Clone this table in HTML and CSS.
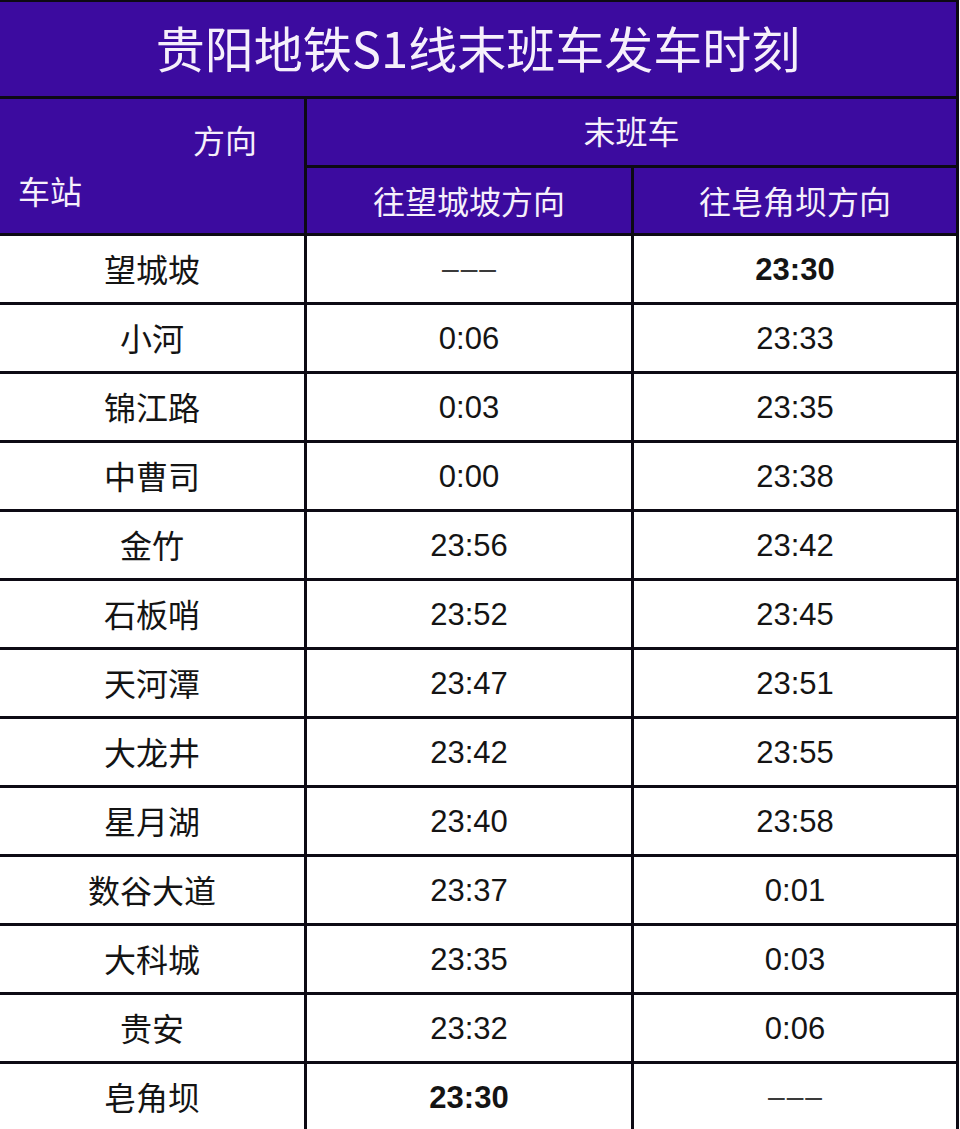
FILE: index.html
```html
<!DOCTYPE html>
<html lang="zh-CN">
<head>
<meta charset="utf-8">
<title>贵阳地铁S1线末班车发车时刻</title>
<link rel="stylesheet" href="styles.css">
</head>
<body>
<div class="sheet">
  <div class="title">贵阳地铁S1线末班车发车时刻</div>
  <div class="corner">
    <span class="dir">方向</span>
    <span class="stn">车站</span>
  </div>
  <div class="hd span2">末班车</div>
  <div class="hd">往望城坡方向</div>
  <div class="hd">往皂角坝方向</div>

  <div class="name">望城坡</div><div class="time dash">–––</div><div class="time bold">23:30</div>
  <div class="name">小河</div><div class="time">0:06</div><div class="time">23:33</div>
  <div class="name">锦江路</div><div class="time">0:03</div><div class="time">23:35</div>
  <div class="name">中曹司</div><div class="time">0:00</div><div class="time">23:38</div>
  <div class="name">金竹</div><div class="time">23:56</div><div class="time">23:42</div>
  <div class="name">石板哨</div><div class="time">23:52</div><div class="time">23:45</div>
  <div class="name">天河潭</div><div class="time">23:47</div><div class="time">23:51</div>
  <div class="name">大龙井</div><div class="time">23:42</div><div class="time">23:55</div>
  <div class="name">星月湖</div><div class="time">23:40</div><div class="time">23:58</div>
  <div class="name">数谷大道</div><div class="time">23:37</div><div class="time">0:01</div>
  <div class="name">大科城</div><div class="time">23:35</div><div class="time">0:03</div>
  <div class="name">贵安</div><div class="time">23:32</div><div class="time">0:06</div>
  <div class="name">皂角坝</div><div class="time bold">23:30</div><div class="time dash">–––</div>
</div>
</body>
</html>
```

FILE: styles.css
```css
html, body {
  margin: 0;
  padding: 0;
  background: #ffffff;
}
body {
  width: 960px;
  height: 1129px;
  overflow: hidden;
  font-family: "Noto Sans CJK SC", "Noto Sans", sans-serif;
}
.sheet {
  width: 956px;
  background: #0d0a14;
  padding: 2px 3px 0 0;
  display: grid;
  grid-template-columns: 304px 324px 322px;
  grid-template-rows: 94px 66px 65px;
  grid-auto-rows: 66px;
  gap: 3px;
}
.title {
  grid-column: 1 / 4;
  background: #3c0b9f;
  color: #f6f0fb;
  font-size: 49px;
  line-height: 1;
  display: flex;
  align-items: center;
  justify-content: center;
  padding-bottom: 5px;
  box-sizing: border-box;
}
.corner {
  grid-row: 2 / 4;
  background: #3c0b9f;
  color: #f6f0fb;
  font-size: 32px;
  line-height: 1;
  display: flex;
  flex-direction: column;
  padding: 24px 0 0 0;
}
.corner .dir {
  align-self: flex-end;
  margin-right: 47px;
}
.corner .stn {
  margin-top: 19px;
  margin-left: 18px;
}
.hd {
  background: #3c0b9f;
  color: #f6f0fb;
  font-size: 32px;
  line-height: 1;
  display: flex;
  align-items: center;
  justify-content: center;
  padding-bottom: 2px;
}
.hd.span2 {
  grid-column: 2 / 4;
  padding-bottom: 4px;
}
.name, .time {
  background: #ffffff;
  color: #141414;
  display: flex;
  align-items: center;
  justify-content: center;
  line-height: 1;
}
.name {
  font-size: 32px;
  padding-bottom: 3px;
}
.time {
  font-family: "Liberation Sans", Arial, sans-serif;
  font-size: 31px;
}
.time.bold {
  font-weight: bold;
}
.time.dash {
  color: #3a3a3a;
  font-size: 30px;
  letter-spacing: 2px;
  padding-left: 2px;
}
```
